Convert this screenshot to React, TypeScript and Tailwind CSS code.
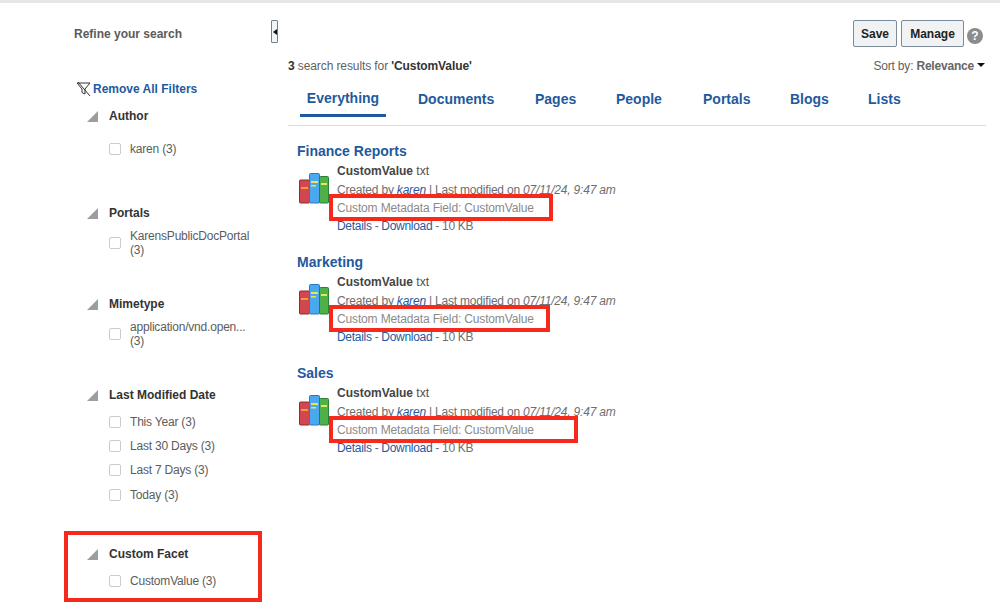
const font = "font-['Liberation_Sans',Arial,sans-serif]";

function Tri() {
  return (
    <svg width="11" height="11" viewBox="0 0 11 11" className="shrink-0">
      <polygon points="11,0 11,11 0,11" fill="#9a9ea3" />
    </svg>
  );
}

function Box({ className = "" }: { className?: string }) {
  return <span className={`block w-3 h-3 shrink-0 rounded-[2px] border border-[#c9cdd1] bg-white ${className}`} />;
}

function Opt({ lines, gap = "" }: { lines: string[]; gap?: string }) {
  return (
    <div className={`flex items-center gap-[9px] ${gap}`}>
      <Box />
      <div className="text-xs leading-[14px] text-[#5c5c5c] tracking-[-0.2px]">
        {lines.map((l) => (
          <div key={l}>{l}</div>
        ))}
      </div>
    </div>
  );
}

function Facet({ title, mt, children }: { title: string; mt: string; children: React.ReactNode }) {
  return (
    <section className={`ml-[22px] ${mt}`}>
      <div className="flex items-center gap-[11px] h-[14px]">
        <Tri />
        <h3 className="text-xs font-bold text-[#333] leading-[14px]">{title}</h3>
      </div>
      <div className="ml-[22px]">{children}</div>
    </section>
  );
}

function Books() {
  return (
    <svg width="30" height="31" viewBox="0 0 30 31" className="shrink-0">
      <rect x="0.5" y="7" width="10" height="23" rx="1" fill="#d2474f" stroke="#8e2c32" />
      <rect x="2" y="14" width="7" height="2" fill="#f0a030" />
      <rect x="10.5" y="0.5" width="10" height="29.5" rx="1" fill="#4aa8ee" stroke="#2c78c0" />
      <rect x="12" y="8" width="7" height="2" fill="#f2e24a" />
      <rect x="12" y="12" width="5" height="1.5" fill="#f2e24a" />
      <rect x="20.5" y="3.5" width="9" height="26.5" rx="1" fill="#4db04a" stroke="#2d8030" />
      <rect x="22" y="10" width="6" height="2" fill="#f2e24a" />
    </svg>
  );
}

function Result({ title, mt }: { title: string; mt: string }) {
  return (
    <article className={mt}>
      <h2 className="text-sm font-bold leading-[18px] text-[#1f5a9e]">{title}</h2>
      <div className="flex mt-[2px] ml-[2px]">
        <div className="w-[38px] pt-[11px]">
          <Books />
        </div>
        <div className="text-xs leading-[18px] text-[#6e6e6e] tracking-[-0.2px]">
          <div className="text-[#4f4f4f] tracking-normal h-[19px]">
            <b className="text-[#444]">CustomValue</b> txt
          </div>
          <div>
            Created by <i className="text-[#1f5a9e] underline">karen</i> | Last modified on <i>07/11/24, 9:47 am</i>
          </div>
          <div className="text-[#8a8a8a] tracking-[-0.15px]">Custom Metadata Field: CustomValue</div>
          <div className="tracking-[-0.3px]">
            <span className="text-[#1f5a9e]">Details</span> - <span className="text-[#1f5a9e]">Download</span> - 10 KB
          </div>
        </div>
      </div>
    </article>
  );
}

const tabs: [string, string][] = [
  ["Documents", "w-[117px]"],
  ["Pages", "w-[81px]"],
  ["People", "w-[87px]"],
  ["Portals", "w-[87px]"],
  ["Blogs", "w-[78px]"],
  ["Lists", "w-[60px]"],
];

function Annot({ className }: { className: string }) {
  return <div className={`absolute border-[4px] border-[#f52a1c] pointer-events-none ${className}`} />;
}

export default function App() {
  return (
    <div className={`${font} relative w-[1000px] h-[616px] overflow-hidden bg-white`}>
      <div className="h-[3px] bg-[#e6e6e6]" />
      <div className="flex">
        <aside className="w-[288px] shrink-0 relative pl-[65px] pt-6">
          <div className="ml-[9px] text-xs font-bold leading-[14px] text-[#5a5a5a]">Refine your search</div>
          <button className="absolute left-[271px] top-[17px] w-[7px] h-[23px] border border-[#6f8297] rounded-[1px] bg-[#f2f4f6] flex items-center justify-center">
            <svg width="4" height="6" viewBox="0 0 4 6"><polygon points="4,0 4,6 0,3" fill="#111" /></svg>
          </button>
          <div className="flex items-center mt-[41px] ml-[11px] h-[14px]">
            <svg width="16" height="16" viewBox="0 0 16 16" className="shrink-0" fill="none" stroke="#333" strokeWidth="1">
              <path d="M1 2h13L9 8v5l-3-1.5V8z" />
              <path d="M2 1l12 14" />
            </svg>
            <span className="ml-px text-xs font-bold text-[#1f5a9e]">Remove All Filters</span>
          </div>
          <Facet title="Author" mt="mt-[13px]"><div className="mt-[19px]"><Opt lines={["karen (3)"]} /></div></Facet>
          <Facet title="Portals" mt="mt-[50px]"><div className="mt-[9px]"><Opt lines={["KarensPublicDocPortal", "(3)"]} /></div></Facet>
          <Facet title="Mimetype" mt="mt-10"><div className="mt-[9px]"><Opt lines={["application/vnd.open...", "(3)"]} /></div></Facet>
          <Facet title="Last Modified Date" mt="mt-10">
            <div className="mt-[13px]">
              <Opt lines={["This Year (3)"]} />
              <Opt lines={["Last 30 Days (3)"]} gap="mt-[10px]" />
              <Opt lines={["Last 7 Days (3)"]} gap="mt-[10px]" />
              <Opt lines={["Today (3)"]} gap="mt-[11px]" />
            </div>
          </Facet>
          <Facet title="Custom Facet" mt="mt-[45px]"><div className="mt-[13px]"><Opt lines={["CustomValue (3)"]} /></div></Facet>
        </aside>
        <main className="w-[698px] shrink-0">
          <div className="flex justify-end items-start pt-[17px] h-[44px]">
            <button className="w-[44px] h-[27px] border border-[#7b8b9a] rounded-[2px] bg-[#f0f2f4] text-xs font-bold text-[#222]">Save</button>
            <button className="ml-1 w-[63px] h-[27px] border border-[#7b8b9a] rounded-[2px] bg-[#f0f2f4] text-xs font-bold text-[#222]">Manage</button>
            <span className="ml-[3px] mr-[3px] mt-2 w-4 h-4 rounded-full bg-[#8c8c8c] text-white text-xs font-bold leading-4 text-center">?</span>
          </div>
          <div className="flex justify-between items-center mt-3 h-[14px] text-xs leading-[14px] text-[#5f5f5f]">
            <div className="tracking-[-0.1px]"><b className="text-[#333]">3</b> search results for <b className="text-[#333]">'CustomValue'</b></div>
            <div className="flex items-center tracking-[-0.2px]">
              Sort by:&nbsp;<b className="text-[#666]">Relevance</b>
              <svg width="8" height="4" viewBox="0 0 8 4" className="ml-[3px] mr-[1px] mb-[3px]"><polygon points="0,0 8,0 4,4" fill="#111" /></svg>
            </div>
          </div>
          <nav className="flex items-start h-[41px] mt-3 pl-3 border-b border-[#d8dde2] text-sm font-bold text-[#1f5a9e] leading-[16px]">
            <div className="w-[86px] h-[32px] pt-[5px] text-center border-b-[3px] border-[#1f5a9e]">Everything</div>
            <div className="w-[32px]" />
            {tabs.map(([t, w]) => (
              <div key={t} className={`${w} pt-[6px]`}>{t}</div>
            ))}
          </nav>
          <div className="pl-[9px]">
            <Result title="Finance Reports" mt="mt-4" />
            <Result title="Marketing" mt="mt-[18px]" />
            <Result title="Sales" mt="mt-[18px]" />
          </div>
        </main>
      </div>
      <Annot className="left-[329px] top-[194px] w-[224px] h-[27px]" />
      <Annot className="left-[329px] top-[305px] w-[221px] h-[27px]" />
      <Annot className="left-[329px] top-[416px] w-[249px] h-[27px]" />
      <Annot className="left-[64px] top-[531px] w-[198px] h-[71px]" />
    </div>
  );
}
